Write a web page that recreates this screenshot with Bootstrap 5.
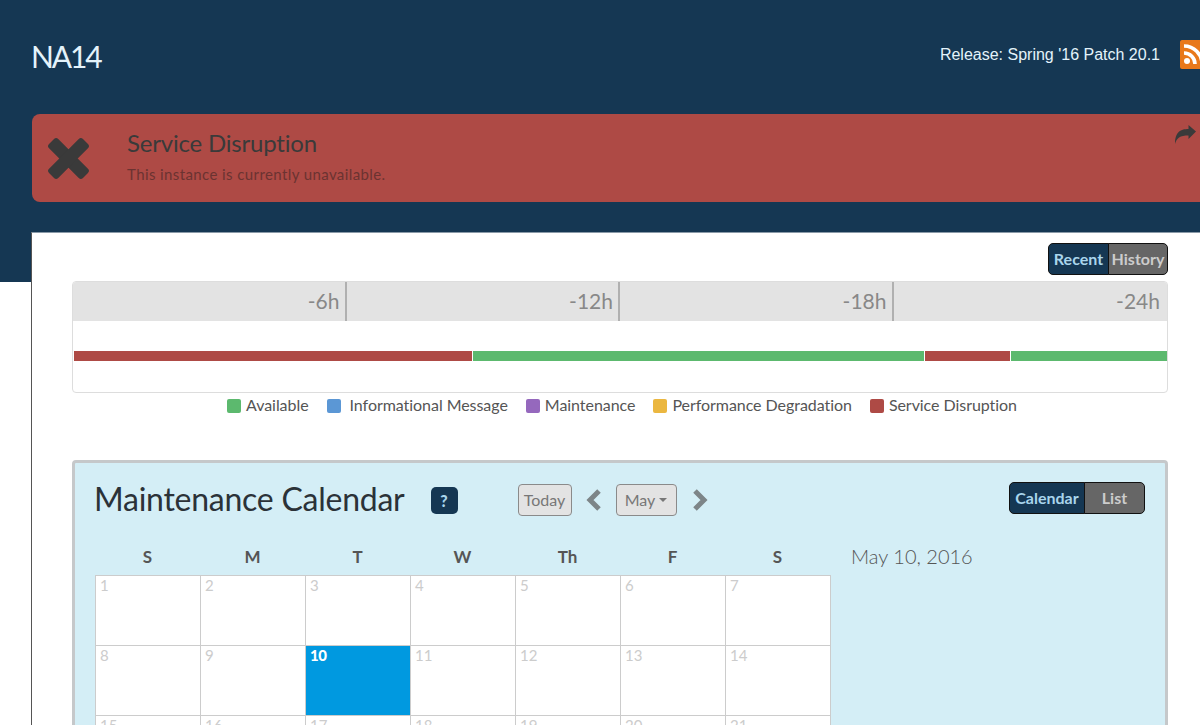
<!DOCTYPE html>
<html lang="en">
<head>
  <title>NA14 - Status</title>
  <meta charset="utf-8">
  <meta name="viewport" content="width=device-width, initial-scale=1">
  <link href="https://cdn.jsdelivr.net/npm/bootstrap@5.3.1/dist/css/bootstrap.min.css" rel="stylesheet">
  <style>
    html, body { height: 725px; overflow: hidden; }
    body { background: #fff; font-family: Lato, "Open Sans", sans-serif; color: #555; }
    .page-wrap { width: 1240px; }

    /* Header */
    .top-band { background: #153753; height: 282px; padding: 39px 32px 0; }
    .head-row { height: 30px; margin-bottom: 45px; }
    .instance-name { font-size: 30px; line-height: 34px; color: #e4f3fb; letter-spacing: -2.1px; margin: 3px 0 0 -1px; font-weight: 400; }
    .release-text { font-family: "Liberation Sans", Arial, sans-serif; font-size: 16px; color: #e4f3fb; margin-right: 20px; margin-top: 1px; }
    .rss-box { width: 28px; height: 29px; background: #e8781a; border-radius: 2px; }

    .status-alert { background: #ae4a45; height: 88px; border-radius: 8px; color: #3a3a3a; padding: 0 12px 0 15px; }
    .x-mark { margin-top: 23px; }
    .share-mark { margin-top: 11px; }
    .status-title { font-size: 24px; line-height: 28px; font-weight: 400; margin: 0 0 7px; color: #3a3a3a; letter-spacing: -.2px; }
    .status-msg { font-size: 15px; line-height: 20px; color: #6b3331; margin: 0; letter-spacing: .4px; }
    .status-text { margin-left: 37px; padding-top: 15px; }

    /* Main panel */
    .main-panel { background: #fff; margin: -50px 31px 0; padding: 10px 41px 0 40px; border-left: 1px solid #555; border-top: 1px solid #8a9aa8; height: 600px; }
    .switch-group .btn { font-size: 16px; font-weight: 700; line-height: 20px; padding: 5px 0; border: 1px solid #111; border-radius: 5px; }
    .switch-group .btn.on { background: #153753; color: #a9d5ec; }
    .switch-group .btn.off { background: #666; color: #ccc; }
    .switch-time .btn.on { width: 61px; }
    .switch-time .btn.off { width: 60px; }
    .switch-cal { margin-top: -1px; }
    .switch-cal .btn.on { width: 76px; }
    .switch-cal .btn.off { width: 61px; }

    .timeline-box { border: 1px solid #ddd; border-radius: 4px; height: 112px; margin-top: 6px; }
    .tick-cell { width: 274px; height: 39px; background: #e3e3e3; border-right: 2px solid #b0b0b0; font-size: 21px; line-height: 38px; color: #888; text-align: right; padding-right: 5px; }
    .tick-cell:last-child { border-right: 0; padding-right: 7px; }
    .bar-row { height: 10px; margin: 30px 0 0 1px; gap: 1px; }
    .seg-red { background: #ae4a45; }
    .seg-green { background: #5cb96e; }

    .legend-row { font-size: 16px; line-height: 24px; height: 24px; gap: 18px; color: #555; letter-spacing: -.05px; padding-left: 4px; }
    .swatch { display: inline-block; width: 14px; height: 14px; border-radius: 2px; margin-right: 5px; vertical-align: -2px; }
    .swatch-wide { margin-right: 9px; }

    /* Calendar */
    .cal-panel { background: #d4eef6; border: 3px solid #c5c8ca; border-radius: 4px; margin-top: 43px; padding: 20px 20px 0; height: 400px; }
    .cal-title { font-size: 32px; line-height: 32px; color: #2b3238; margin: 0 0 0 -1px; font-weight: 400; letter-spacing: -.25px; }
    .help-badge { width: 27px; height: 27px; background: #153753; color: #a9d5ec; border-radius: 5px; font-size: 16px; font-weight: 900; margin-left: 26px; margin-top: 4px; }
    .cal-nav { margin-left: 60px; margin-top: 1px; }
    .cal-btn { background: #e3e3e3; border: 1px solid #8a8a8a; border-radius: 4px; color: #777; font-size: 16px; line-height: 30px; height: 32px; padding: 0; }
    .btn-today { width: 54px; }
    .btn-month { width: 61px; }
    .cal-body { margin-top: 29px; }
    .cal-grid { display: grid; grid-template-columns: repeat(7, 105px); width: 736px; }
    .day-head { height: 30px; text-align: center; font-size: 17px; line-height: 24px; font-weight: 700; color: #555; }
    .day-cell { height: 71px; background: #fff; border: 1px solid #ccc; margin: 0 -1px -1px 0; font-size: 15px; line-height: 18px; padding: 0 4px; color: #ccc; }
    .day-cell.today { background: #0099e0; color: #fff; font-weight: 900; letter-spacing: -.5px; }
    .picked-date { font-size: 20px; line-height: 24px; color: #555; margin: -1px 0 0 20px; font-weight: 300; }
  </style>
</head>
<body>

<div class="page-wrap">
  <div class="top-band">
    <div class="head-row d-flex justify-content-between align-items-center">
      <h1 class="instance-name">NA14</h1>
      <div class="d-flex align-items-center">
        <span class="release-text">Release: Spring '16 Patch 20.1</span>
        <span class="rss-box d-flex align-items-center justify-content-center">
          <svg width="24" height="24" viewBox="0 0 24 24" fill="none" stroke="#fff" stroke-width="3.6">
            <circle cx="5" cy="19" r="3" fill="#fff" stroke="none"/>
            <path d="M2 11a11 11 0 0 1 11 11"/>
            <path d="M2 4a18 18 0 0 1 18 18"/>
          </svg>
        </span>
      </div>
    </div>
    <div class="status-alert d-flex align-items-start">
      <svg class="x-mark flex-shrink-0" width="43" height="43" viewBox="0 0 43 43" fill="#3a3a3a">
        <rect x="-2.500" y="15" width="48" height="13" rx="3" transform="rotate(45 21.500 21.500)"/>
        <rect x="-2.500" y="15" width="48" height="13" rx="3" transform="rotate(-45 21.500 21.500)"/>
      </svg>
      <div class="status-text flex-grow-1">
        <h2 class="status-title">Service Disruption</h2>
        <p class="status-msg">This instance is currently unavailable.</p>
      </div>
      <svg class="share-mark flex-shrink-0" width="21" height="19" viewBox="0 0 21 19">
        <path d="M21 6.500 13.500 0v4C6 4 0 6.500 0 19c1.500-6 5-8.500 13.500-8.500V14z" fill="#3a3a3a"/>
      </svg>
    </div>
  </div>

  <div class="main-panel">
    <div class="d-flex justify-content-end">
      <div class="btn-group switch-group switch-time">
        <button type="button" class="btn on">Recent</button>
        <button type="button" class="btn off">History</button>
      </div>
    </div>

    <div class="timeline-box overflow-hidden">
      <div class="d-flex">
        <div class="tick-cell">-6h</div>
        <div class="tick-cell">-12h</div>
        <div class="tick-cell">-18h</div>
        <div class="tick-cell flex-grow-1">-24h</div>
      </div>
      <div class="bar-row d-flex">
        <div class="seg-red" style="width: 398px"></div>
        <div class="seg-green" style="width: 452px"></div>
        <div class="seg-red" style="width: 85px"></div>
        <div class="seg-green" style="width: 156px"></div>
      </div>
    </div>

    <div class="legend-row d-flex justify-content-center">
      <span><i class="swatch" style="background:#5cb96e"></i>Available</span>
      <span><i class="swatch swatch-wide" style="background:#5b97d5"></i>Informational Message</span>
      <span><i class="swatch" style="background:#9568bd"></i>Maintenance</span>
      <span><i class="swatch" style="background:#ebb740"></i>Performance Degradation</span>
      <span><i class="swatch" style="background:#ae4a45"></i>Service Disruption</span>
    </div>

    <div class="cal-panel">
      <div class="d-flex align-items-start">
        <h2 class="cal-title">Maintenance Calendar</h2>
        <span class="help-badge d-flex align-items-center justify-content-center">?</span>
        <div class="cal-nav d-flex align-items-center gap-2">
          <button type="button" class="btn cal-btn btn-today">Today</button>
          <svg width="28" height="24" viewBox="0 0 28 24" fill="none" stroke="#7d8588" stroke-width="5"><path d="M19 3 10 12l9 9"/></svg>
          <button type="button" class="btn cal-btn btn-month dropdown-toggle">May</button>
          <svg width="28" height="24" viewBox="0 0 28 24" fill="none" stroke="#7d8588" stroke-width="5"><path d="M10 3l9 9-9 9"/></svg>
        </div>
        <div class="btn-group switch-group switch-cal ms-auto">
          <button type="button" class="btn on">Calendar</button>
          <button type="button" class="btn off">List</button>
        </div>
      </div>

      <div class="cal-body d-flex align-items-start">
        <div class="cal-grid" id="calGrid"></div>
        <div class="picked-date">May 10, 2016</div>
      </div>
    </div>
  </div>
</div>

<script>
  const calGrid = document.getElementById("calGrid");
  const dayNames = ["S", "M", "T", "W", "Th", "F", "S"];
  let cells = dayNames.map(d => `<div class="day-head">${d}</div>`).join("");
  for (let i = 1; i <= 28; i++) {
    cells += `<div class="day-cell${i === 10 ? " today" : ""}">${i}</div>`;
  }
  calGrid.innerHTML = cells;
</script>
<script src="https://cdn.jsdelivr.net/npm/bootstrap@5.3.1/dist/js/bootstrap.bundle.min.js"></script>
</body>
</html>
